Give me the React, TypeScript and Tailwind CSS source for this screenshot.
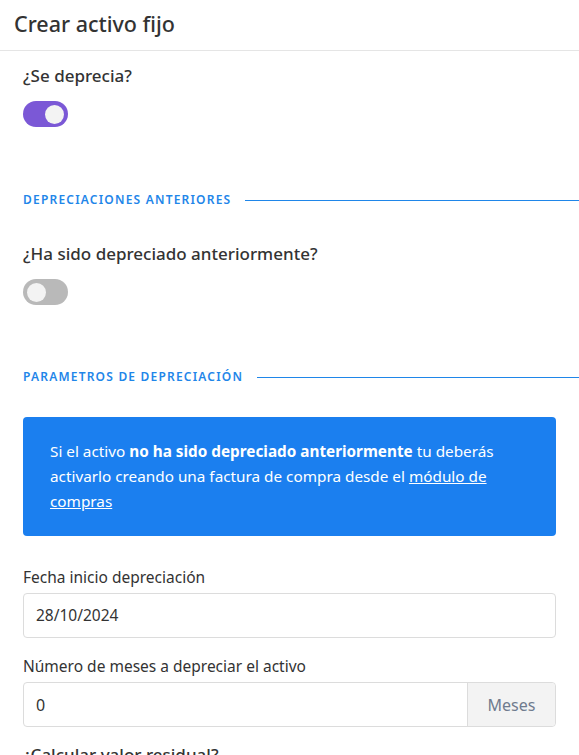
export default function App() {
  return (
    <div
      className="min-h-screen bg-white text-[#333]"
      style={{ fontFamily: '"Noto Sans", "Open Sans", sans-serif' }}
    >
      <div className="h-[51px] border-b border-[#e5e5e5] px-[14px] pt-[9px]">
        <h1 className="text-[21.5px] font-medium leading-[30px] text-[#333]">Crear activo fijo</h1>
      </div>

      <div className="px-[23px]">
        <div className="mt-[13px] text-[17px] font-medium leading-[24px]">¿Se deprecia?</div>
        <div className="mt-[13px] flex h-[26px] w-[45px] items-center justify-end rounded-full bg-[#7b58d6] px-[4px]">
          <div className="h-[19px] w-[19px] rounded-full bg-[#f3f3f3]" />
        </div>

        <div className="mt-[64px] flex items-center gap-[14px]">
          <span className="text-[12px] font-semibold tracking-[0.1em] text-[#1f86e9]">
            DEPRECIACIONES ANTERIORES
          </span>
          <div className="mr-[-23px] h-px flex-1 bg-[#1f86e9]" />
        </div>

        <div className="mt-[33px] text-[17px] font-medium leading-[24px]">¿Ha sido depreciado anteriormente?</div>
        <div className="mt-[13px] flex h-[26px] w-[45px] items-center justify-start rounded-full bg-[#b9b9b9] px-[4px]">
          <div className="h-[19px] w-[19px] rounded-full bg-[#f3f3f3]" />
        </div>

        <div className="mt-[63px] flex items-center gap-[14px]">
          <span className="text-[12px] font-semibold tracking-[0.1em] text-[#1f86e9]">
            PARAMETROS DE DEPRECIACIÓN
          </span>
          <div className="mr-[-23px] h-px flex-1 bg-[#1f86e9]" />
        </div>

        <div className="mt-[31px] rounded-[4px] bg-[#1b7fef] px-[27px] py-[22px] text-[15.3px] leading-[25px] text-white">
          Si el activo <b className="font-bold">no ha sido depreciado anteriormente</b> tu deberás activarlo creando una
          factura de compra desde el <a className="underline">módulo de compras</a>
        </div>

        <div className="mt-[29px] text-[15.5px] leading-[24px]">Fecha inicio depreciación</div>
        <div className="mt-[4px] flex h-[45px] items-center rounded-[4px] border border-[#dcdcdc] px-[12px] text-[15.5px]">
          28/10/2024
        </div>

        <div className="mt-[16px] text-[15.5px] leading-[24px]">Número de meses a depreciar el activo</div>
        <div className="mt-[4px] flex h-[45px] rounded-[4px] border border-[#dcdcdc] text-[16px]">
          <div className="flex flex-1 items-center px-[12px]">0</div>
          <div className="flex w-[88px] items-center justify-center rounded-r-[4px] border-l border-[#dcdcdc] bg-[#f3f3f3] text-[#6f7b8e]">
            Meses
          </div>
        </div>

        <div className="mt-[16px] text-[17px] font-medium leading-[24px]">¿Calcular valor residual?</div>
        <div className="mt-[13px] flex h-[26px] w-[45px] items-center justify-start rounded-full bg-[#b9b9b9] px-[4px]">
          <div className="h-[19px] w-[19px] rounded-full bg-[#f3f3f3]" />
        </div>
      </div>
    </div>
  );
}
